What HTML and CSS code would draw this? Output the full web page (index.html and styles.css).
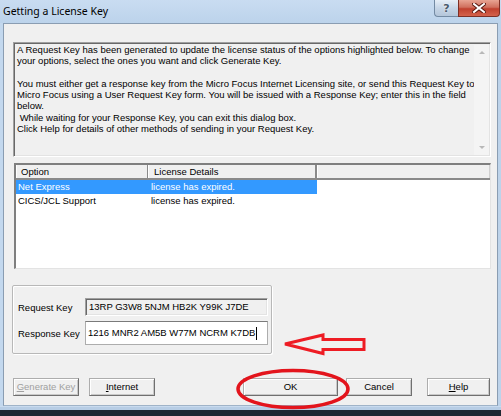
FILE: index.html
```html
<!DOCTYPE html>
<html>
<head>
<meta charset="utf-8">
<link rel="stylesheet" href="styles.css">
</head>
<body>
<div class="window">
  <div class="titlebar">
    <span class="title">Getting a License Key</span>
    <div class="caption-btns">
      <div class="cbtn qbtn">?</div>
      <div class="cbtn xbtn">
        <svg width="14" height="10" viewBox="0 0 14 10"><path d="M2 1 L12 9 M12 1 L2 9" stroke="#5a1a12" stroke-width="4" stroke-linecap="square"/><path d="M2 1 L12 9 M12 1 L2 9" stroke="#fff" stroke-width="2" stroke-linecap="square"/></svg>
      </div>
    </div>
  </div>
  <div class="client">
    <div class="memo">
      <div class="memo-text">
        <div class="ln">A Request Key has been generated to update the license status of the options highlighted below. To change</div>
        <div class="ln">your options, select the ones you want and click Generate Key.</div>
        <div class="ln">&nbsp;</div>
        <div class="ln">You must either get a response key from the Micro Focus Internet Licensing site, or send this Request Key to</div>
        <div class="ln">Micro Focus using a User Request Key form. You will be issued with a Response Key; enter this in the field</div>
        <div class="ln">below.</div>
        <div class="ln"> While waiting for your Response Key, you can exit this dialog box.</div>
        <div class="ln">Click Help for details of other methods of sending in your Request Key.</div>
      </div>
      <div class="vscroll">
        <span class="arr up"></span>
        <span class="arr down"></span>
      </div>
    </div>
    <div class="listview">
      <div class="lv-head">
        <div class="hcol c1">Option</div>
        <div class="hcol c2">License Details</div>
        <div class="hcol c3"></div>
      </div>
      <div class="lv-row sel"><span class="cell c1">Net Express</span><span class="cell c2">license has expired.</span></div>
      <div class="lv-row"><span class="cell c1">CICS/JCL Support</span><span class="cell c2">license has expired.</span></div>
    </div>
    <div class="keys">
      <div class="keyrow">
        <span class="klabel">Request Key</span>
        <div class="field ro">13RP G3W8 5NJM HB2K Y99K J7DE</div>
      </div>
      <div class="keyrow">
        <span class="klabel">Response Key</span>
        <div class="field rw">1216 MNR2 AM5B W77M NCRM K7DB<span class="caret"></span></div>
      </div>
    </div>
    <div class="buttons">
      <div class="btn b-gen disabled"><u>G</u>enerate Key</div>
      <div class="btn b-net"><u>I</u>nternet</div>
      <div class="btn b-ok">OK</div>
      <div class="btn b-cancel">Cancel</div>
      <div class="btn b-help"><u>H</u>elp</div>
    </div>
  </div>
  <div class="frame-bottom"></div>
</div>
<svg class="annot" width="501" height="416" viewBox="0 0 501 416">
  <ellipse cx="293" cy="389" rx="55" ry="18.5" fill="none" stroke="#e3141c" stroke-width="3.5"/>
  <polygon points="285,344 323,335 323,339.5 364,339.5 364,349.5 323,349.5 323,353.5" fill="none" stroke="#ee1c24" stroke-width="3" stroke-linejoin="miter"/>
</svg>
</body>
</html>
```

FILE: styles.css
```css
* { box-sizing: border-box; }
html, body { margin: 0; padding: 0; }
body {
  width: 501px;
  height: 416px;
  background: #1f2833;
  position: relative;
  overflow: hidden;
  font-family: "Liberation Sans", Arial, sans-serif;
  font-size: 9.5px;
  color: #000;
}
.window {
  width: 501px;
  height: 410px;
  background: linear-gradient(to right, #c3d8ee, #cfe0f2 40%, #bdd3ea);
  padding: 0 3px;
  display: flex;
  flex-direction: column;
}
.titlebar {
  height: 23px;
  display: flex;
  justify-content: space-between;
  align-items: flex-start;
  margin: 0 -3px;
  padding-left: 3px;
  background: linear-gradient(to bottom, #c9dcf1, #bcd3eb);
}
.title {
  font-family: "Noto Sans", "Open Sans", sans-serif;
  font-size: 10.5px;
  line-height: 22px;
  color: #000;
}
.caption-btns {
  display: flex;
  margin-right: 1px;
}
.cbtn {
  height: 17px;
  display: flex;
  align-items: center;
  justify-content: center;
}
.qbtn {
  width: 24px;
  border: 1px solid #738aa3;
  border-top: none;
  border-right: none;
  border-radius: 0 0 0 4px;
  background: linear-gradient(to bottom, #e6eef7, #c6d5e6 50%, #b4c6da);
  font-family: "DejaVu Sans", sans-serif;
  font-weight: bold;
  font-size: 11px;
  color: #4a5a6c;
  text-shadow: 0 0 2px #fff;
}
.xbtn {
  width: 42px;
  border: 1px solid #7d2f25;
  border-top: none;
  border-radius: 0 0 4px 0;
  background: linear-gradient(to bottom, #e8a493, #d0705e 45%, #c0402e 55%, #d4624c);
}
.client {
  flex: 1;
  background: #f0f0f0;
  border: 1px solid #8a9db2;
  border-bottom-color: #9fb3c8;
  padding: 18px 0 0 9px;
  display: flex;
  flex-direction: column;
  align-items: flex-start;
}
.memo {
  width: 478px;
  height: 115px;
  flex: none;
  display: flex;
  border-top: 1px solid #a0a0a0;
  border-left: 1px solid #a0a0a0;
  border-right: 1px solid #fff;
  border-bottom: 1px solid #fff;
  box-shadow: inset 1px 1px 0 #696969, inset -1px -1px 0 #e3e3e3;
  background: #f0f0f0;
  margin-bottom: 6px;
}
.memo-text {
  flex: 1;
  padding: 1px 0 0 3px;
  line-height: 11.3px;
}
.ln { white-space: pre; }
.vscroll {
  width: 16px;
  margin: 2px 1px 1px 0;
  background: #f4f4f4;
  display: flex;
  flex-direction: column;
  justify-content: space-between;
  align-items: center;
  padding: 6px 0 6px;
}
.arr {
  width: 0;
  height: 0;
  border-left: 3px solid transparent;
  border-right: 3px solid transparent;
}
.arr.up { border-bottom: 3px solid #b8b8b8; }
.arr.down { border-top: 3px solid #b8b8b8; }
.listview {
  width: 477px;
  height: 106px;
  flex: none;
  margin-left: 1px;
  margin-bottom: 16px;
  background: #fff;
  border-top: 2px solid #7f7f7f;
  border-left: 2px solid #7f7f7f;
  border-right: 1px solid #e3e3e3;
  border-bottom: 1px solid #e3e3e3;
}
.lv-head {
  display: flex;
  height: 15px;
  background: #f0f0f0;
  border-bottom: 2px solid #8a8a8a;
}
.hcol {
  line-height: 13px;
  padding-left: 5px;
  border-right: 1px solid #8a8a8a;
  box-shadow: inset 1px 0 0 #fff;
}
.hcol.c1 { width: 132px; }
.hcol.c2 { width: 169px; padding-left: 6px; border-right: 2px solid #8a8a8a; }
.hcol.c3 { flex: 1; border-right: 1px solid #d0d0d0; }
.lv-row {
  display: flex;
  height: 14px;
  line-height: 14px;
}
.cell.c1 { width: 132px; padding-left: 2px; }
.cell.c2 { width: 169px; padding-left: 3px; }
.lv-row.sel .cell { background: #3399ff; color: #fff; }
.keys {
  width: 260px;
  height: 69px;
  flex: none;
  margin-left: -1px;
  margin-bottom: 24px;
  border: 1px solid #b8b8b8;
  box-shadow: inset 1px 1px 0 #fff, 1px 1px 0 #fff;
  border-radius: 2px;
  padding: 12px 0 0 5px;
  display: flex;
  flex-direction: column;
  gap: 5px;
}
.keyrow {
  display: flex;
  align-items: center;
}
.klabel { width: 67px; }
.field {
  width: 183px;
  white-space: pre;
  padding-left: 3px;
}
.field.ro {
  height: 18px;
  line-height: 16px;
  background: #f0f0f0;
  border-top: 1px solid #a0a0a0;
  border-left: 1px solid #a0a0a0;
  border-right: 1px solid #fff;
  border-bottom: 1px solid #fff;
  box-shadow: inset 1px 1px 0 #696969, inset -1px -1px 0 #e3e3e3;
}
.field.rw {
  height: 24px;
  line-height: 22px;
  background: #fff;
  border: 1px solid #adadad;
  border-top-color: #7a7a7a;
  display: flex;
  align-items: center;
  padding-left: 2px;
}
.caret {
  display: inline-block;
  width: 1px;
  height: 13px;
  background: #000;
  margin-left: 1px;
}
.buttons {
  display: flex;
  height: 18px;
}
.btn {
  height: 18px;
  line-height: 16px;
  text-align: center;
  background: #f0f0f0;
  border: 1px solid #adadad;
  border-right-color: #6f6f6f;
  border-bottom-color: #6f6f6f;
  box-shadow: inset 1px 1px 0 #fff, inset -1px -1px 0 #c8c8c8;
}
.btn.disabled { color: #a0a0a0; }
.b-gen { width: 66px; }
.b-net { width: 66px; margin-left: 10px; }
.b-ok { width: 95px; margin-left: 88px; }
.b-cancel { width: 66px; margin-left: 8px; }
.b-help { width: 63px; margin-left: 15px; }
.frame-bottom {
  height: 4px;
  margin: 0 -3px;
  background: #b7cde5;
  border-top: 1px solid #c9dbef;
}
.annot {
  position: absolute;
  left: 0;
  top: 0;
  pointer-events: none;
}
```
